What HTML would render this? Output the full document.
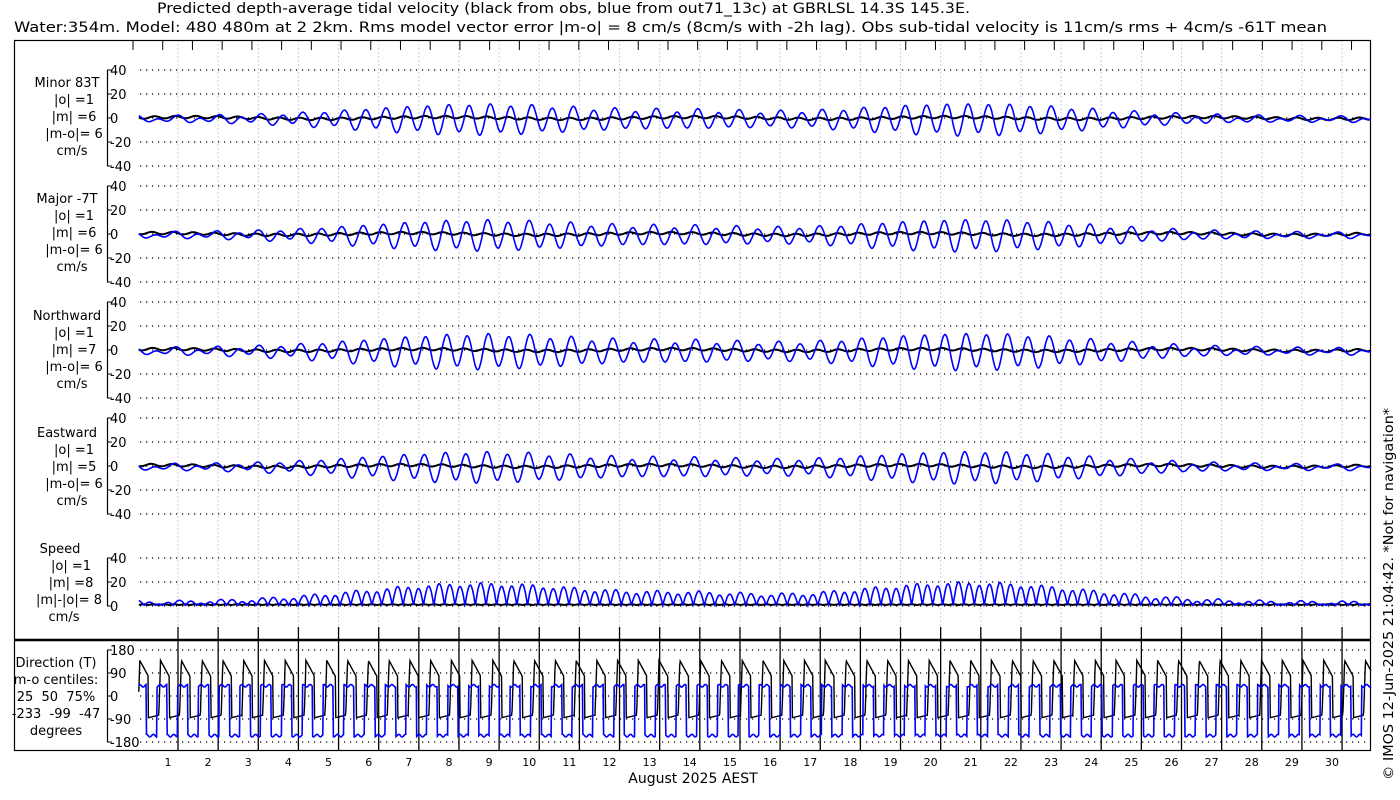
<!DOCTYPE html>
<html><head><meta charset="utf-8"><style>
html,body{margin:0;padding:0;background:#fff;width:1400px;height:800px;overflow:hidden}
svg{display:block;font-family:"DejaVu Sans","Liberation Sans",sans-serif}
</style></head><body>
<svg id="s" width="1400" height="800" xmlns="http://www.w3.org/2000/svg">
<text x="157" y="13" font-size="14" textLength="813" lengthAdjust="spacingAndGlyphs">Predicted depth-average tidal velocity (black from obs, blue from out71_13c) at GBRLSL 14.3S 145.3E.</text>
<text x="14" y="32" font-size="14" textLength="1313" lengthAdjust="spacingAndGlyphs">Water:354m. Model: 480 480m at 2 2km. Rms model vector error |m-o| = 8 cm/s (8cm/s with -2h lag). Obs sub-tidal velocity is 11cm/s rms + 4cm/s -61T mean</text>
<text x="693" y="783" font-size="14" text-anchor="middle">August 2025 AEST</text>
<text transform="translate(1393,780) rotate(-90)" font-size="13" textLength="372" lengthAdjust="spacingAndGlyphs">© IMOS 12-Jun-2025 21:04:42. *Not for navigation*</text>
<g id="g"></g>
</svg>
<script>
var g=document.getElementById('g'),h='';
function L(x1,y1,x2,y2,st){h+='<line x1="'+x1+'" y1="'+y1+'" x2="'+x2+'" y2="'+y2+'" '+st+'/>';}
function T(x,y,s,a,fs){h+='<text x="'+x+'" y="'+y+'" font-size="'+(fs||13)+'" text-anchor="'+(a||'middle')+'">'+s+'</text>';}
var X0=138,X1=1371,DX=40.14;
for(var k=0;k<31;k++){var x=178+k*DX;if(x<X1)L(x,40,x,640,'stroke="#c8d0ee" stroke-width="1" stroke-dasharray="2,2"');}
for(var x=133;x<X1;x+=29.72)L(x,40,x,50,'stroke="#000" stroke-width="1"');
h+='<rect x="14.5" y="40.5" width="1356" height="710" fill="none" stroke="#000" stroke-width="1.2"/>';
L(14,640,1371,640,'stroke="#000" stroke-width="2.5"');
for(var k=0;k<30;k++){var x=178+k*DX;L(x,627,x,751,'stroke="#000" stroke-width="1.3"');T(168+k*DX,766,''+(k+1),'middle',11);}
var panels=[
{z:118,lab:['Minor 83T','|o| =1','|m| =6','|m-o|= 6','cm/s'],ly:87,ticks:[40,20,0,-20,-40],sc:1.2},
{z:234,lab:['Major -7T','|o| =1','|m| =6','|m-o|= 6','cm/s'],ly:203,ticks:[40,20,0,-20,-40],sc:1.2},
{z:350,lab:['Northward','|o| =1','|m| =7','|m-o|= 6','cm/s'],ly:320,ticks:[40,20,0,-20,-40],sc:1.2},
{z:466,lab:['Eastward','|o| =1','|m| =5','|m-o|= 6','cm/s'],ly:437,ticks:[40,20,0,-20,-40],sc:1.2},
{z:606,lab:['Speed','|o| =1','|m| =8','|m|-|o|= 8','cm/s'],ly:553,ticks:[40,20,0],sc:1.2,lx:[60,71,71,69,64]},
{z:696,lab:['Direction (T)','m-o centiles:','25  50  75%','-233  -99  -47','degrees'],ly:667,ticks:[180,90,0,-90,-180],sc:0.2556}
];
var lx=[67,74,74,74,72];
panels.forEach(function(p,i){
 var top=p.z-p.ticks[0]*p.sc,bot=p.z-p.ticks[p.ticks.length-1]*p.sc;
 L(107.5,top,107.5,bot,'stroke="#000" stroke-width="1.2"');
 p.ticks.forEach(function(v){var y=p.z-v*p.sc;L(107,y,112,y,'stroke="#000"');
  L(140,y,X1,y,'stroke="#000" stroke-width="1.2" stroke-dasharray="1.2,4.8"');
  T(110,y+5,''+v,'start',13);});
 p.lab.forEach(function(s,j){T(i==5?56:(p.lx?p.lx[j]:lx[j]),p.ly+j*17,s.replace(/ /g,'&#160;'),'middle',13);});
});
var P=0.5175,P1=0.9973;
function env(t){return 1.5+10.5*Math.exp(-Math.pow((t-8.5)/4.2,2))+11*Math.exp(-Math.pow((t-20.7)/4.2,2))+3*Math.exp(-Math.pow((t-14)/2,2));}
function model(t,ph){return env(t)*Math.cos(2*Math.PI*t/P+ph)+1.5*Math.cos(2*Math.PI*t/P1+ph*0.7)-1;}
function obs(t,ph){return 1.0*Math.cos(2*Math.PI*t/P+ph+1)+0.8*Math.sin(2*Math.PI*t/6.3+ph);}
function path(f,z,sc,col,w){var d='';for(var t=0.02;t<=30.72;t+=0.012){var x=X0+t*DX,y=z-f(t)*sc;d+=(d?'L':'M')+x.toFixed(1)+' '+y.toFixed(1);}
 h+='<path d="'+d+'" fill="none" stroke="'+col+'" stroke-width="'+w+'"/>';}
var phs=[0.3,1.1,0.9,1.3];
for(var i=0;i<4;i++){(function(ph,z,k){
 path(function(t){return obs(t,ph);},z,1.2,'#000',2);
 path(function(t){return model(t,ph)*(k==2?1.15:1);},z,1.2,'#0000ff',1.6);})(phs[i],panels[i].z,i);}
path(function(t){return 0.8+0.6*Math.abs(Math.sin(2*Math.PI*t/P));},606,1.2,'#000',2);
path(function(t){var a=env(t)*1.45;return Math.abs(a*Math.cos(2*Math.PI*t/P)+1.5*Math.cos(2*Math.PI*t/P1))+0.5;},606,1.2,'#0000ff',1.6);
path(function(t){var f=(t/P)%1;if(f<0.08)return -80+f/0.08*200;if(f<0.5)return 140-(f-0.08)*150;return -85+(f-0.5)*20;},696,0.2556,'#000',1.4);
path(function(t){var f=((t+0.05)/P)%1;var n=5*Math.sin(t*37);if(f<0.5)return 40+n;return -155+n;},696,0.2556,'#0000ff',1.6);
g.innerHTML=h;
</script>
</body></html>
